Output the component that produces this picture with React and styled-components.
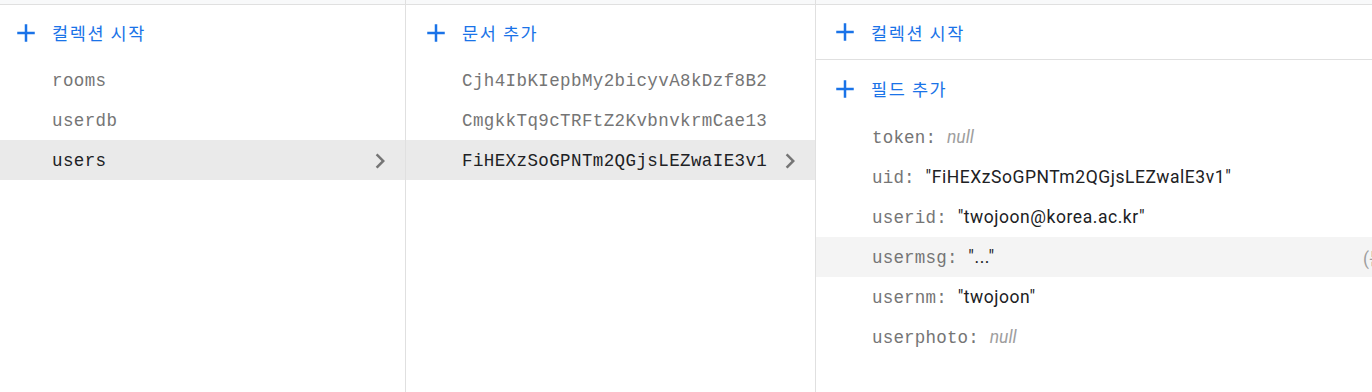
import React from 'react'
import styled, {createGlobalStyle} from 'styled-components';

const GlobalStyle = createGlobalStyle`
  html, body, #root {
    margin: 0;
    height: 100%;
  }

  body {
    background: #fff;
    font-family: Roboto, "Noto Sans CJK KR", sans-serif;
    overflow: hidden;
  }
`;

const PlusIcon = () => (
    <svg width="30" height="30" viewBox="0 0 24 24">
        <path d="M19 13h-6v6h-2v-6H5v-2h6V5h2v6h6v2z" fill="#1a73e8"/>
    </svg>
);

const ChevronIcon = () => (
    <svg width="30" height="30" viewBox="0 0 24 24">
        <path d="M10 6L8.59 7.41 13.17 12l-4.58 4.59L10 18l6-6z" fill="#757575"/>
    </svg>
);

const collections = ['rooms', 'userdb', 'users'];
const documents = ['Cjh4IbKIepbMy2bicyvA8kDzf8B2', 'CmgkkTq9cTRFtZ2KvbnvkrmCae13', 'FiHEXzSoGPNTm2QGjsLEZwaIE3v1'];

const fields = [
    {key: 'token', value: null},
    {key: 'uid', value: 'FiHEXzSoGPNTm2QGjsLEZwalE3v1'},
    {key: 'userid', value: 'twojoon@korea.ac.kr'},
    {key: 'usermsg', value: '...', hover: true},
    {key: 'usernm', value: 'twojoon'},
    {key: 'userphoto', value: null},
];

const App = () => {
    return (
        <Page>
            <GlobalStyle/>
            <Column width={406}>
                <TopEdge/>
                <AddButton pad={11}>
                    <PlusIcon/>
                    <span>컬렉션 시작</span>
                </AddButton>
                {collections.map(name => (
                    <ListRow key={name} indent={52} selected={name === 'users'}>
                        <span>{name}</span>
                        {name === 'users' && <ChevronIcon/>}
                    </ListRow>
                ))}
            </Column>
            <Column width={410}>
                <TopEdge/>
                <AddButton pad={15}>
                    <PlusIcon/>
                    <span>문서 추가</span>
                </AddButton>
                {documents.map(id => (
                    <ListRow key={id} indent={56} selected={id.startsWith('FiHEX')}>
                        <span>{id}</span>
                        {id.startsWith('FiHEX') && <ChevronIcon/>}
                    </ListRow>
                ))}
            </Column>
            <Column width={700} last>
                <TopEdge/>
                <AddButton pad={14} divided>
                    <PlusIcon/>
                    <span>컬렉션 시작</span>
                </AddButton>
                <AddButton pad={14} height={57}>
                    <PlusIcon/>
                    <span>필드 추가</span>
                </AddButton>
                {fields.map(f => (
                    <FieldRow key={f.key} hover={f.hover}>
                        <FieldText>
                            <Key>{f.key}: </Key>
                            {f.value === null
                                ? <Null>null</Null>
                                : <Value>"{f.value}"</Value>}
                        </FieldText>
                        {f.hover && <TypeHint>(문자열)</TypeHint>}
                    </FieldRow>
                ))}
            </Column>
        </Page>
    )
}

const Page = styled.div`
  display: flex;
  height: 100%;
  width: 1372px;
  overflow: hidden;
`;

const Column = styled.div`
  flex: none;
  width: ${p => p.width}px;
  display: flex;
  flex-direction: column;
  border-right: ${p => p.last ? 'none' : '1px solid #e0e0e0'};
  box-sizing: border-box;
`;

const TopEdge = styled.div`
  height: 4px;
  background: #f8f9fa;
  border-bottom: 1px solid #e0e0e0;
`;

const AddButton = styled.div`
  display: flex;
  align-items: center;
  gap: 11px;
  height: ${p => p.height || 55}px;
  padding-left: ${p => p.pad}px;
  border-bottom: ${p => p.divided ? '1px solid #e0e0e0' : 'none'};
  box-sizing: border-box;
  color: #1a73e8;
  font-family: "Noto Sans CJK KR", sans-serif;
  font-size: 17.5px;
  letter-spacing: 1.6px;
  cursor: pointer;

  svg {
    flex: none;
  }
`;

const ListRow = styled.div`
  display: flex;
  align-items: center;
  justify-content: space-between;
  height: 40px;
  padding: 1px 10px 0 ${p => p.indent}px;
  box-sizing: border-box;
  background: ${p => p.selected ? '#eaeaea' : 'transparent'};
  color: ${p => p.selected ? '#202124' : '#757575'};
  font-family: "Liberation Mono", "DejaVu Sans Mono", monospace;
  font-size: 17.5px;
  letter-spacing: 0.4px;
  cursor: pointer;
`;

const FieldRow = styled.div`
  display: grid;
  grid-template-columns: 491px auto;
  align-items: center;
  height: 40px;
  padding: 1px 0 0 56px;
  box-sizing: border-box;
  background: ${p => p.hover ? '#f4f4f4' : 'transparent'};
`;

const FieldText = styled.div`
  display: flex;
  align-items: baseline;
  white-space: nowrap;
`;

const Key = styled.span`
  white-space: pre;
  font-family: "Liberation Mono", "DejaVu Sans Mono", monospace;
  font-size: 17.5px;
  letter-spacing: 0.2px;
  color: #757575;
`;

const Value = styled.span`
  font-family: Roboto, sans-serif;
  font-size: 17.5px;
  color: #202124;
  letter-spacing: 0.55px;
`;

const Null = styled.span`
  font-family: Roboto, sans-serif;
  font-style: italic;
  font-size: 17.5px;
  color: #9e9e9e;
`;

const TypeHint = styled.span`
  font-family: Roboto, "Noto Sans CJK KR", sans-serif;
  font-size: 17.5px;
  color: #9e9e9e;
  white-space: nowrap;
`;

export default App;
